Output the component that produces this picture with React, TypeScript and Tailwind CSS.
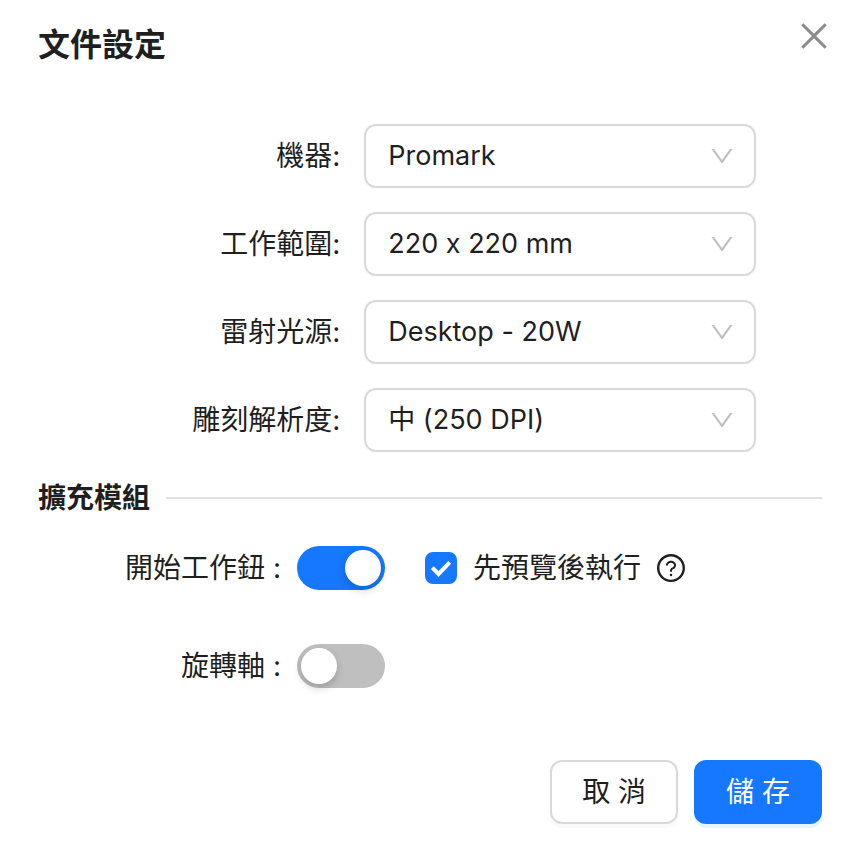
/** Document settings dialog: machine options, add-on modules and footer actions. */

import { useState } from "react";
import { AiOutlineClose, AiOutlineDown, AiOutlineQuestionCircle } from "react-icons/ai";

const FIELDS = [
  { id: "machine", label: "機器", options: ["Promark", "Beamo", "Beambox"] },
  { id: "workarea", label: "工作範圍", options: ["220 x 220 mm", "150 x 150 mm", "110 x 110 mm"] },
  { id: "source", label: "雷射光源", options: ["Desktop - 20W", "Desktop - 50W"] },
  { id: "dpi", label: "雕刻解析度", options: ["中 (250 DPI)", "高 (500 DPI)", "低 (125 DPI)"] },
];

interface SelectFieldProps {
  id: string;
  label: string;
  options: string[];
}

function SelectField({ id, label, options }: SelectFieldProps) {
  return (
    <div className="grid grid-cols-12 items-center">
      <label htmlFor={id} className="col-span-5 pr-6 text-right">
        {label}:
      </label>
      <div className="relative col-span-6">
        {/* calt off, otherwise Inter turns "220 x 220" into a multiplication sign */}
        <select
          id={id}
          className="h-16 w-full appearance-none rounded-xl border-2 border-[#d9d9d9] bg-white pr-16 pl-[22px] text-[27px] outline-none [font-feature-settings:'calt'_0] focus:border-[#1677ff]"
        >
          {options.map((o) => (
            <option key={o}>{o}</option>
          ))}
        </select>
        <AiOutlineDown className="pointer-events-none absolute inset-y-0 right-5 my-auto size-7 text-[#bfbfbf]" />
      </div>
    </div>
  );
}

interface SwitchProps {
  id: string;
  checked: boolean;
  onChange: (v: boolean) => void;
}

function Switch({ id, checked, onChange }: SwitchProps) {
  return (
    <button
      id={id}
      type="button"
      role="switch"
      aria-checked={checked}
      onClick={() => onChange(!checked)}
      className={`flex h-11 w-[88px] shrink-0 items-center rounded-full p-1 ${
        checked ? "justify-end bg-[#1677ff]" : "justify-start bg-[#bfbfbf]"
      }`}
    >
      <span className="size-9 rounded-full bg-white shadow-[0_4px_8px_rgba(0,35,11,0.2)]" />
    </button>
  );
}

export default function App() {
  const [startButton, setStartButton] = useState(true);
  const [preview, setPreview] = useState(true);
  const [rotary, setRotary] = useState(false);

  return (
    <div
      role="dialog"
      aria-labelledby="title"
      className="min-h-screen bg-white pt-[21px] pr-[34px] pb-5 pl-[38px] font-[Inter,'Noto_Sans_CJK_TC',sans-serif] text-[28px] leading-[44px] text-[#1f1f1f]"
    >
      <header className="relative flex">
        <h1 id="title" className="text-[32px] leading-[48px] font-bold">
          文件設定
        </h1>
        <button type="button" aria-label="關閉" className="absolute -top-1 -right-[11px] text-[#8c8c8c]">
          <AiOutlineClose className="size-[38px]" />
        </button>
      </header>

      <form className="mt-[55px] mr-px flex flex-col gap-6">
        {FIELDS.map((f) => (
          <SelectField key={f.id} {...f} />
        ))}
      </form>

      <div className="mt-6 flex items-center gap-4">
        <h2 className="font-bold">擴充模組</h2>
        <div className="h-0.5 flex-1 bg-[#e0e0e0]" />
      </div>

      <div className="mt-4 flex flex-col gap-[34px]">
        <div className="flex h-16 items-center">
          <label htmlFor="start-button" className="w-[259px] pr-4 text-right">
            開始工作鈕 :
          </label>
          <Switch id="start-button" checked={startButton} onChange={setStartButton} />
          <label className="ml-10 flex items-center gap-4">
            <span className="relative flex">
              <input
                type="checkbox"
                checked={preview}
                onChange={(e) => setPreview(e.target.checked)}
                className="size-8 appearance-none rounded-lg border-2 border-[#d9d9d9] checked:border-[#1677ff] checked:bg-[#1677ff]"
              />
              {preview && (
                <svg viewBox="0 0 32 32" className="pointer-events-none absolute inset-0 size-8">
                  <path d="M7.3 15.6 13.5 22 24.7 10.4" fill="none" stroke="#fff" strokeWidth="4" />
                </svg>
              )}
            </span>
            先預覽後執行
          </label>
          <AiOutlineQuestionCircle className="ml-[14px] size-8" />
        </div>
        <div className="flex h-16 items-center">
          <label htmlFor="rotary" className="w-[259px] pr-4 text-right">
            旋轉軸 :
          </label>
          <Switch id="rotary" checked={rotary} onChange={setRotary} />
        </div>
      </div>

      <footer className="mt-[62px] flex justify-end gap-4">
        <button
          type="button"
          className="h-16 rounded-xl border-2 border-[#d9d9d9] px-[30px] shadow-[0_4px_0_rgba(0,0,0,0.02)]"
        >
          取 消
        </button>
        <button
          type="button"
          className="h-16 rounded-xl bg-[#1677ff] px-8 text-white shadow-[0_4px_0_rgba(5,145,255,0.1)]"
        >
          儲 存
        </button>
      </footer>
    </div>
  );
}
